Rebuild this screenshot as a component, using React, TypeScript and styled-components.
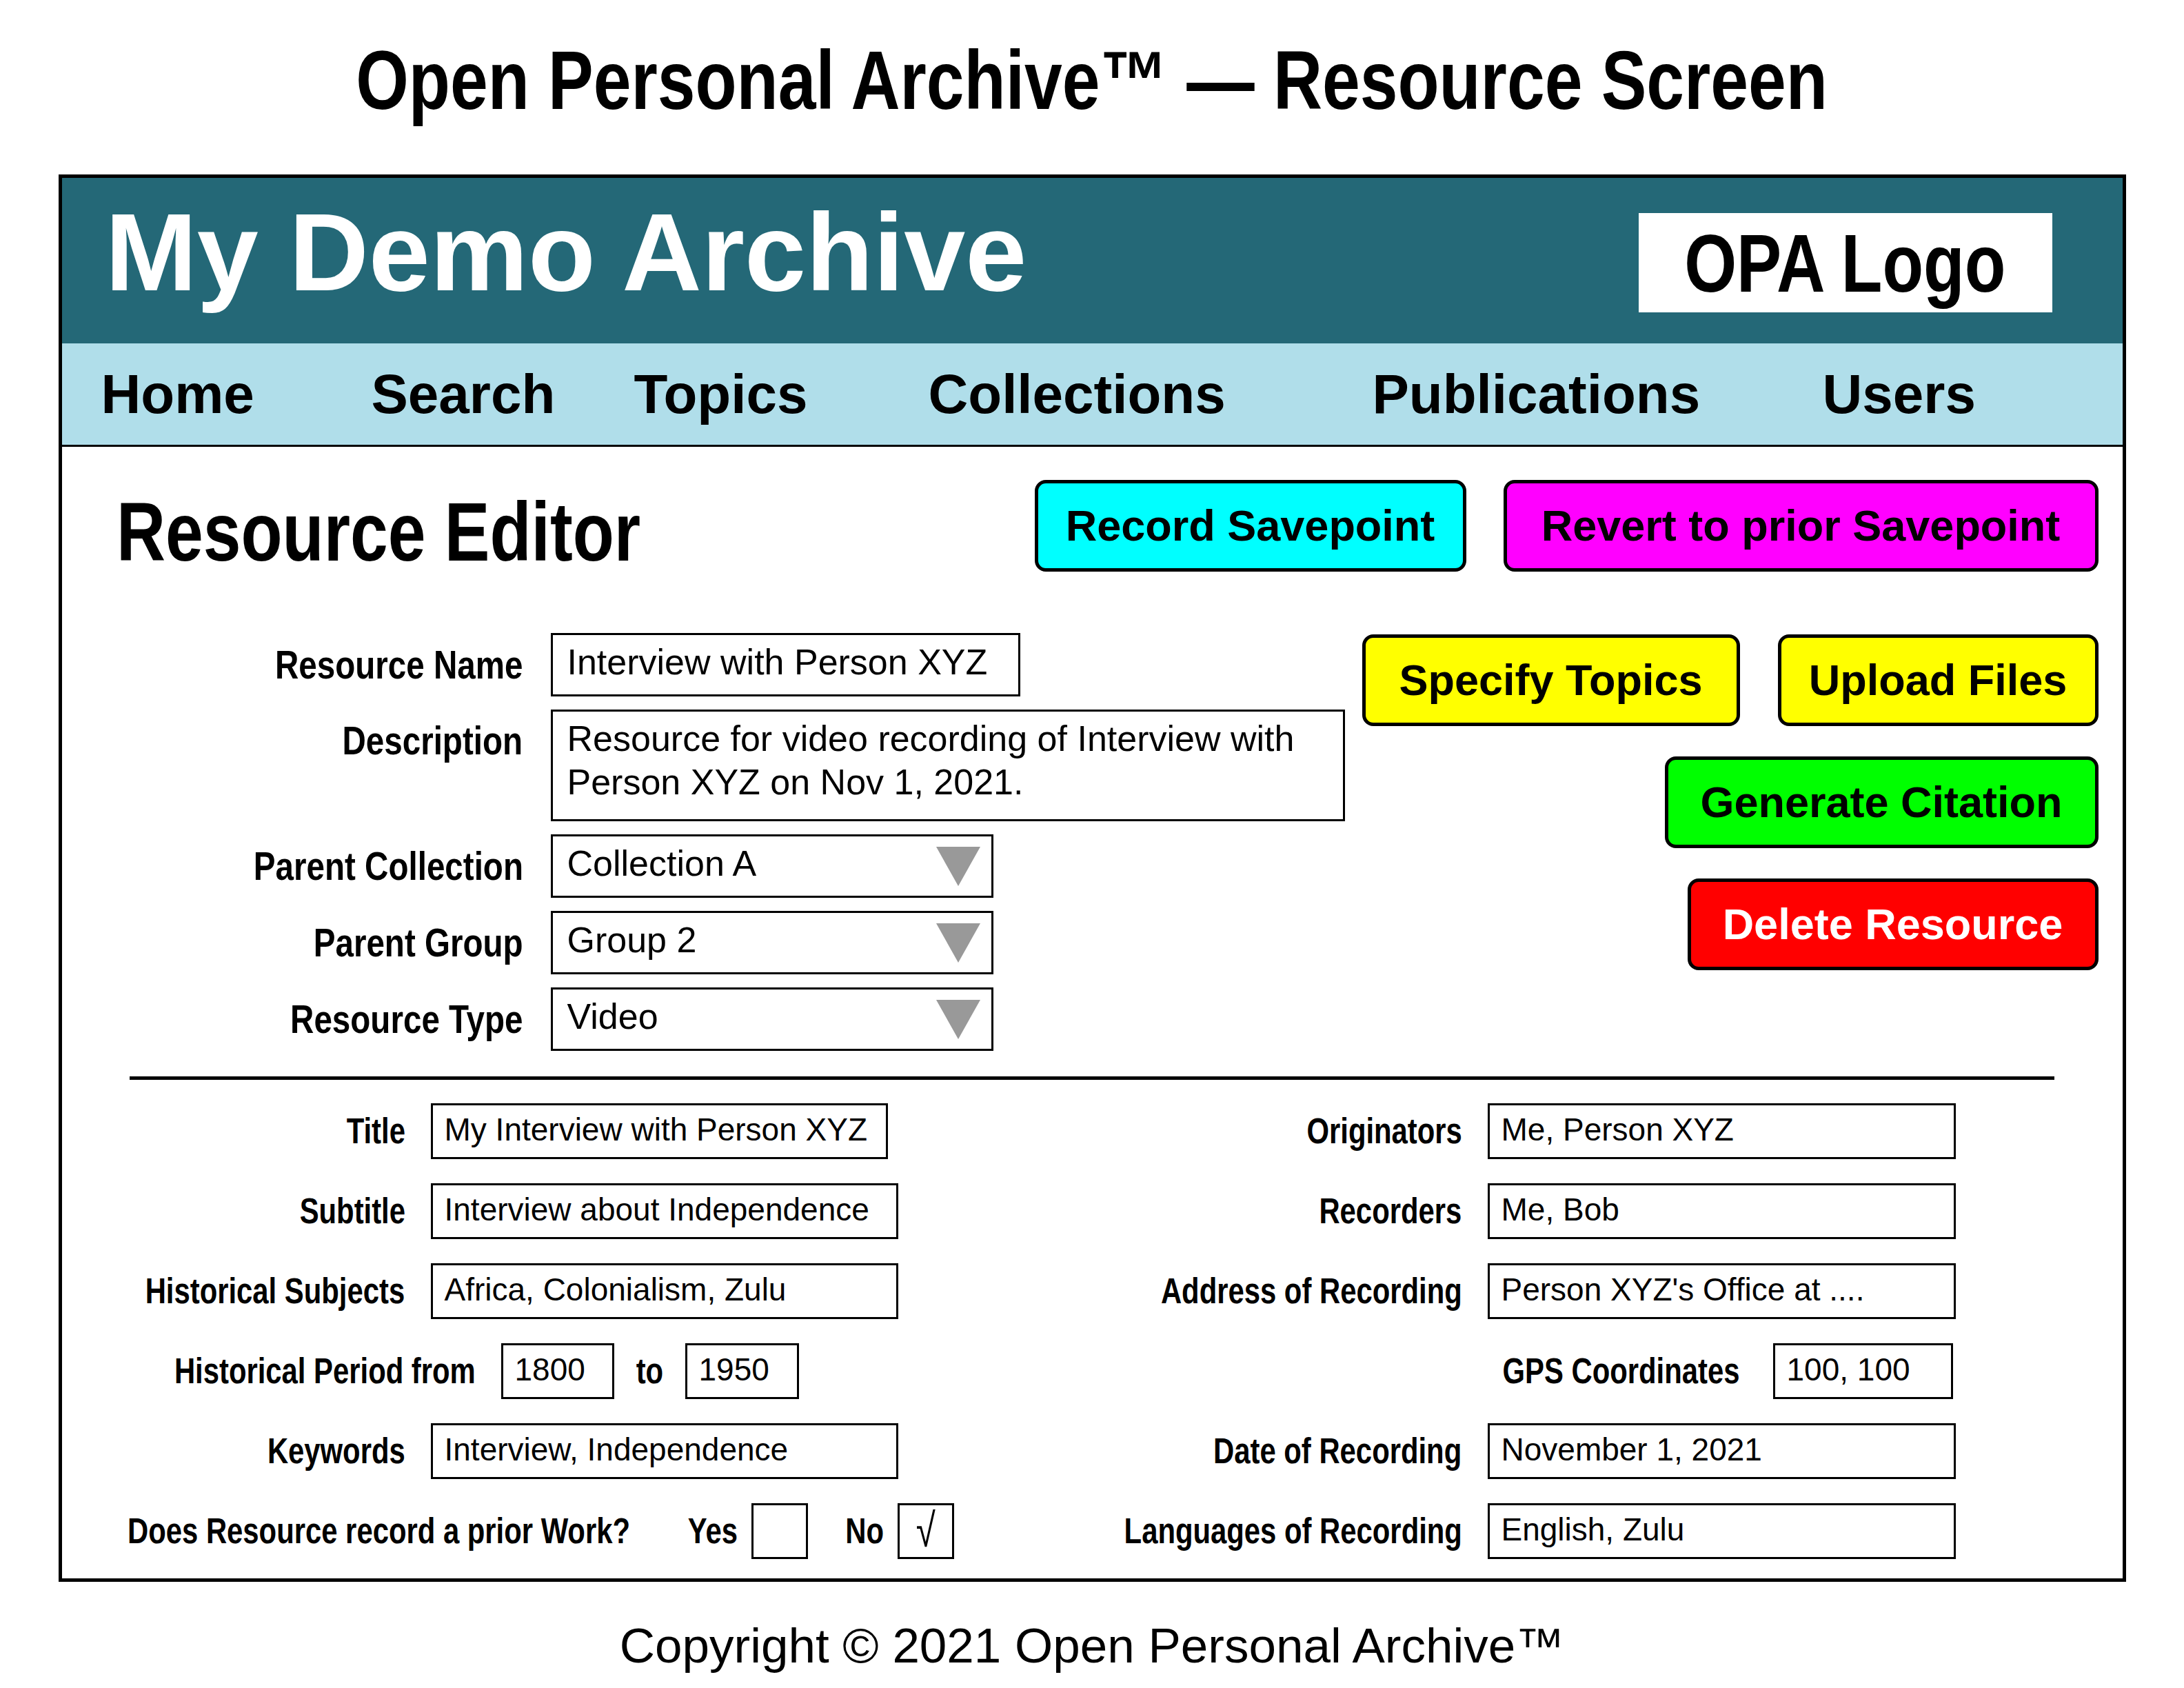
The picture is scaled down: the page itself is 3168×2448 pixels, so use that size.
import React from "react";
import styled, { createGlobalStyle } from "styled-components";

const SANS = `"Liberation Sans", Arial, Helvetica, sans-serif`;
const NARROW_RATIO = 0.82;

const GlobalStyle = createGlobalStyle`
  html, body { margin: 0; padding: 0; background: #ffffff; }
  body { font-family: ${SANS}; color: #000000; }
  *, *::before, *::after { box-sizing: border-box; }
`;

/* No narrow face is installed, so condensed bold text is drawn with
   Liberation Sans Bold compressed horizontally (Arial Narrow proportions). */
const Condensed = styled.span<{ $origin?: string }>`
  display: inline-block;
  white-space: nowrap;
  transform: scaleX(${NARROW_RATIO});
  transform-origin: ${(p) => p.$origin ?? "right center"};
`;

const Page = styled.div`
  width: 3168px;
  min-height: 2448px;
  display: flex;
  flex-direction: column;
  align-items: center;
  padding-top: 56px;
`;

const PageTitle = styled.h1`
  margin: 0;
  font-family: ${SANS};
  font-weight: 700;
  font-size: 120px;
  line-height: 1;
  white-space: nowrap;
`;

const Frame = styled.div`
  width: 2999px;
  margin-top: 77px;
  border: 5px solid #000000;
  display: flex;
  flex-direction: column;
`;

const Header = styled.header`
  height: 240px;
  background: #246877;
  display: flex;
  align-items: center;
  justify-content: space-between;
  padding: 0 102px 0 63px;
`;

const ArchiveName = styled.div`
  font-family: ${SANS};
  font-weight: 700;
  font-size: 160px;
  line-height: 1;
  color: #ffffff;
  margin-bottom: 24px;
  white-space: nowrap;
`;

const Logo = styled.div`
  width: 600px;
  height: 144px;
  margin-top: 6px;
  background: #ffffff;
  display: flex;
  align-items: center;
  justify-content: center;
  font-family: ${SANS};
  font-weight: 700;
  font-size: 119px;
  line-height: 1;
  white-space: nowrap;
`;

const Nav = styled.nav`
  height: 150px;
  background: #b0deea;
  border-bottom: 3px solid #000000;
  display: flex;
  align-items: center;
  padding-left: 57px;
`;

const NavItem = styled.a<{ $w?: number }>`
  ${(p) => (p.$w ? `width: ${p.$w}px;` : "")}
  flex-shrink: 0;
  font-family: ${SANS};
  font-weight: 700;
  font-size: 80px;
  line-height: 1;
  color: #000000;
  text-decoration: none;
  white-space: nowrap;
`;

const Content = styled.main`
  display: flex;
  flex-direction: column;
  padding: 45px 35px 28px 0;
  background: #ffffff;
`;

const EditorHeader = styled.div`
  display: flex;
  align-items: center;
  justify-content: space-between;
  padding-left: 79px;
`;

const EditorTitle = styled.h2`
  margin: 18px 0 0 0;
  font-family: ${SANS};
  font-weight: 700;
  font-size: 120px;
  line-height: 1;
  white-space: nowrap;
`;

const ButtonGroup = styled.div<{ $gap: number }>`
  display: flex;
  gap: ${(p) => p.$gap}px;
`;

const ActionButton = styled.button<{ $bg: string; $fg?: string; $w: number }>`
  width: ${(p) => p.$w}px;
  height: 133px;
  flex-shrink: 0;
  border: 5px solid #000000;
  border-radius: 16px;
  background: ${(p) => p.$bg};
  color: ${(p) => p.$fg ?? "#000000"};
  font-family: ${SANS};
  font-weight: 700;
  font-size: 63px;
  line-height: 1;
  white-space: nowrap;
  padding: 0;
  display: flex;
  align-items: center;
  justify-content: center;
  cursor: pointer;
`;

const UpperSection = styled.section`
  display: flex;
  justify-content: space-between;
  align-items: flex-start;
  margin-top: 87px;
  padding-left: 79px;
`;

const FormGrid = styled.div`
  display: grid;
  grid-template-columns: 590px auto;
  column-gap: 40px;
  row-gap: 19px;
  align-items: center;
`;

const UpperLabel = styled.label<{ $top?: number }>`
  display: flex;
  justify-content: flex-end;
  font-family: ${SANS};
  font-weight: 700;
  font-size: 58px;
  line-height: 1;
  white-space: nowrap;
  ${(p) => (p.$top !== undefined ? `align-self: start; margin-top: ${p.$top}px;` : "")}
`;

const UpperBox = styled.div<{ $w: number; $h?: number }>`
  width: ${(p) => p.$w}px;
  height: ${(p) => p.$h ?? 92}px;
  border: 3px solid #000000;
  background: #ffffff;
  font-family: ${SANS};
  font-size: 52px;
  line-height: 63px;
  padding: 8px 21px 0 21px;
  white-space: nowrap;
`;

const SelectBox = styled(UpperBox)`
  display: flex;
  justify-content: space-between;
  align-items: flex-start;
  padding-right: 16px;
`;

const Arrow = styled.svg`
  align-self: center;
  margin-top: -8px;
  flex-shrink: 0;
`;

const ButtonStack = styled.div`
  display: flex;
  flex-direction: column;
  align-items: flex-end;
  gap: 44px;
  margin-top: 2px;
`;

const Divider = styled.hr`
  height: 5px;
  margin: 37px 64px 0 98px;
  border: none;
  background: #000000;
`;

const LowerSection = styled.section`
  display: flex;
  justify-content: space-between;
  margin-top: 34px;
  padding: 0 207px 0 79px;
`;

const Column = styled.div`
  display: flex;
  flex-direction: column;
  gap: 35px;
`;

const FieldRow = styled.div<{ $gap?: number; $indent?: number; $end?: boolean }>`
  display: flex;
  align-items: center;
  gap: ${(p) => p.$gap ?? 37}px;
  ${(p) => (p.$indent ? `margin-left: ${p.$indent}px;` : "")}
  ${(p) => (p.$end ? "justify-content: flex-end;" : "")}
`;

const LowerLabel = styled.label<{ $w?: number; $ml?: number }>`
  ${(p) => (p.$w ? `width: ${p.$w}px;` : "")}
  ${(p) => (p.$ml ? `margin-left: ${p.$ml}px;` : "")}
  flex-shrink: 0;
  display: flex;
  justify-content: flex-end;
  font-family: ${SANS};
  font-weight: 700;
  font-size: 51px;
  line-height: 1;
  white-space: nowrap;
`;

const LowerBox = styled.div<{ $w: number; $mr?: number }>`
  width: ${(p) => p.$w}px;
  height: 81px;
  flex-shrink: 0;
  border: 3px solid #000000;
  background: #ffffff;
  font-family: ${SANS};
  font-size: 46px;
  line-height: 56px;
  padding: 7px 17px 0 17px;
  white-space: nowrap;
  ${(p) => (p.$mr ? `margin-right: ${p.$mr}px;` : "")}
`;

const CheckBox = styled.div`
  width: 82px;
  height: 81px;
  flex-shrink: 0;
  border: 3px solid #000000;
  background: #ffffff;
  display: flex;
  align-items: flex-start;
  justify-content: center;
  padding-top: 2px;
  font-family: ${SANS};
  font-size: 68px;
  line-height: 1;
  overflow: hidden;
`;

const CheckMark = styled.span`
  display: inline-block;
  transform: scaleX(0.75);
`;

const Copyright = styled.footer`
  margin-top: 57px;
  font-family: ${SANS};
  font-size: 71px;
  line-height: 1;
  white-space: nowrap;
`;

const DropArrow = () => (
  <Arrow width="64" height="57" viewBox="0 0 64 57" aria-hidden="true">
    <polygon points="0,0 64,0 32,57" fill="#999999" />
  </Arrow>
);

const navItems: { label: string; w?: number }[] = [
  { label: "Home", w: 392 },
  { label: "Search", w: 381 },
  { label: "Topics", w: 427 },
  { label: "Collections", w: 644 },
  { label: "Publications", w: 653 },
  { label: "Users" },
];

export default function App() {
  return (
    <>
      <GlobalStyle />
      <Page>
        <PageTitle>
          <Condensed $origin="center center">Open Personal Archive™ — Resource Screen</Condensed>
        </PageTitle>
        <Frame>
          <Header>
            <ArchiveName>My Demo Archive</ArchiveName>
            <Logo>
              <Condensed $origin="center center">OPA Logo</Condensed>
            </Logo>
          </Header>
          <Nav>
            {navItems.map((n) => (
              <NavItem key={n.label} $w={n.w} href="#">
                {n.label}
              </NavItem>
            ))}
          </Nav>
          <Content>
            <EditorHeader>
              <EditorTitle>
                <Condensed $origin="left center">Resource Editor</Condensed>
              </EditorTitle>
              <ButtonGroup $gap={54}>
                <ActionButton $bg="#00ffff" $w={626}>
                  Record Savepoint
                </ActionButton>
                <ActionButton $bg="#ff00ff" $w={863}>
                  Revert to prior Savepoint
                </ActionButton>
              </ButtonGroup>
            </EditorHeader>

            <UpperSection>
              <FormGrid>
                <UpperLabel>
                  <Condensed>Resource Name</Condensed>
                </UpperLabel>
                <UpperBox $w={681}>Interview with Person XYZ</UpperBox>

                <UpperLabel $top={16}>
                  <Condensed>Description</Condensed>
                </UpperLabel>
                <UpperBox $w={1152} $h={162}>
                  Resource for video recording of Interview with
                  <br />
                  Person XYZ on Nov 1, 2021.
                </UpperBox>

                <UpperLabel>
                  <Condensed>Parent Collection</Condensed>
                </UpperLabel>
                <SelectBox $w={642}>
                  <span>Collection A</span>
                  <DropArrow />
                </SelectBox>

                <UpperLabel>
                  <Condensed>Parent Group</Condensed>
                </UpperLabel>
                <SelectBox $w={642}>
                  <span>Group 2</span>
                  <DropArrow />
                </SelectBox>

                <UpperLabel>
                  <Condensed>Resource Type</Condensed>
                </UpperLabel>
                <SelectBox $w={642}>
                  <span>Video</span>
                  <DropArrow />
                </SelectBox>
              </FormGrid>

              <ButtonStack>
                <ButtonGroup $gap={55}>
                  <ActionButton $bg="#ffff00" $w={548}>
                    Specify Topics
                  </ActionButton>
                  <ActionButton $bg="#ffff00" $w={465}>
                    Upload Files
                  </ActionButton>
                </ButtonGroup>
                <ActionButton $bg="#00ff00" $w={629}>
                  Generate Citation
                </ActionButton>
                <ActionButton $bg="#ff0000" $fg="#ffffff" $w={596}>
                  Delete Resource
                </ActionButton>
              </ButtonStack>
            </UpperSection>

            <Divider />

            <LowerSection>
              <Column>
                <FieldRow>
                  <LowerLabel $w={419}>
                    <Condensed>Title</Condensed>
                  </LowerLabel>
                  <LowerBox $w={663}>My Interview with Person XYZ</LowerBox>
                </FieldRow>
                <FieldRow>
                  <LowerLabel $w={419}>
                    <Condensed>Subtitle</Condensed>
                  </LowerLabel>
                  <LowerBox $w={678}>Interview about Independence</LowerBox>
                </FieldRow>
                <FieldRow>
                  <LowerLabel $w={419}>
                    <Condensed>Historical Subjects</Condensed>
                  </LowerLabel>
                  <LowerBox $w={678}>Africa, Colonialism, Zulu</LowerBox>
                </FieldRow>
                <FieldRow $indent={77} $gap={31}>
                  <LowerLabel $w={444}>
                    <Condensed>Historical Period from</Condensed>
                  </LowerLabel>
                  <LowerBox $w={164} style={{ marginLeft: 6 }}>1800</LowerBox>
                  <LowerLabel $w={41}>
                    <Condensed>to</Condensed>
                  </LowerLabel>
                  <LowerBox $w={165}>1950</LowerBox>
                </FieldRow>
                <FieldRow>
                  <LowerLabel $w={419}>
                    <Condensed>Keywords</Condensed>
                  </LowerLabel>
                  <LowerBox $w={678}>Interview, Independence</LowerBox>
                </FieldRow>
                <FieldRow $gap={20}>
                  <LowerLabel $w={745}>
                    <Condensed>Does Resource record a prior Work?</Condensed>
                  </LowerLabel>
                  <LowerLabel $w={69} $ml={67}>
                    <Condensed>Yes</Condensed>
                  </LowerLabel>
                  <CheckBox />
                  <LowerLabel $w={57} $ml={33}>
                    <Condensed>No</Condensed>
                  </LowerLabel>
                  <CheckBox>
                    <CheckMark>√</CheckMark>
                  </CheckBox>
                </FieldRow>
              </Column>

              <Column>
                <FieldRow>
                  <LowerLabel $w={560}>
                    <Condensed>Originators</Condensed>
                  </LowerLabel>
                  <LowerBox $w={679}>Me, Person XYZ</LowerBox>
                </FieldRow>
                <FieldRow>
                  <LowerLabel $w={560}>
                    <Condensed>Recorders</Condensed>
                  </LowerLabel>
                  <LowerBox $w={679}>Me, Bob</LowerBox>
                </FieldRow>
                <FieldRow>
                  <LowerLabel $w={560}>
                    <Condensed>Address of Recording</Condensed>
                  </LowerLabel>
                  <LowerBox $w={679}>Person XYZ's Office at ....</LowerBox>
                </FieldRow>
                <FieldRow $end $gap={48}>
                  <LowerLabel>
                    <Condensed>GPS Coordinates</Condensed>
                  </LowerLabel>
                  <LowerBox $w={261} $mr={4}>100, 100</LowerBox>
                </FieldRow>
                <FieldRow>
                  <LowerLabel $w={560}>
                    <Condensed>Date of Recording</Condensed>
                  </LowerLabel>
                  <LowerBox $w={679}>November 1, 2021</LowerBox>
                </FieldRow>
                <FieldRow>
                  <LowerLabel $w={560}>
                    <Condensed>Languages of Recording</Condensed>
                  </LowerLabel>
                  <LowerBox $w={679}>English, Zulu</LowerBox>
                </FieldRow>
              </Column>
            </LowerSection>
          </Content>
        </Frame>
        <Copyright>Copyright © 2021 Open Personal Archive™</Copyright>
      </Page>
    </>
  );
}
